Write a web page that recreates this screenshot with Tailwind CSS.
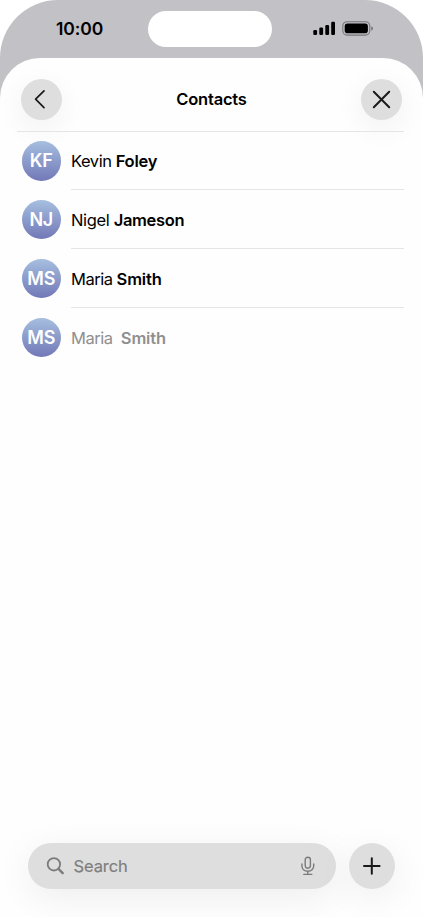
<!DOCTYPE html>
<html lang="en">
<head>
<meta charset="utf-8">
<title>Contacts</title>
<script src="https://cdn.jsdelivr.net/npm/@tailwindcss/browser@4"></script>
</head>
<body class="bg-white font-['Inter',sans-serif] text-black overflow-hidden">
<div class="w-[423px] h-[917px] overflow-hidden rounded-t-[58px] bg-[#c2c1c6] flex flex-col">
  <header class="h-[58px] shrink-0 flex items-start">
    <div class="w-[148px] pl-[56px] pt-[17px] text-[17.5px] leading-6 font-semibold tracking-[-0.1px]">10:00</div>
    <div class="mt-[11px] w-[123.5px] h-[36px] rounded-full bg-white"></div>
    <svg class="ml-[41.5px] mt-[21px]" width="61" height="15" viewBox="0 0 61 15">
      <rect x="0.3" y="9" width="3.8" height="5" rx="1.2"/>
      <rect x="6.3" y="6.6" width="3.8" height="7.4" rx="1.2"/>
      <rect x="12.3" y="4" width="3.8" height="10" rx="1.2"/>
      <rect x="18.2" y="0.8" width="3.8" height="13.2" rx="1.2"/>
      <rect x="29.8" y="0.7" width="27" height="13.4" rx="4.3" fill="none" stroke="#77767a" stroke-width="1.1"/>
      <rect x="31.7" y="2.6" width="23.2" height="9.6" rx="2.8"/>
      <path d="M58.2 5.2c1.2.5 1.8 1.2 1.8 2.2s-.6 1.7-1.8 2.2z" fill="#77767a"/>
    </svg>
  </header>
  <main class="flex-1 rounded-t-[40px] bg-[#fefefe] flex flex-col">
    <div class="h-[73px] shrink-0 px-[20.5px] pt-[20.5px] flex justify-between items-start">
      <button class="size-[41.5px] rounded-full bg-[#dedede] shadow-[0_8px_30px_rgba(0,0,0,0.06),0_0_1px_1px_rgba(255,255,255,0.6)] flex items-center justify-center" aria-label="Back">
        <svg class="shrink-0" width="42" height="42" viewBox="0 0 42 42" fill="none" stroke="#1a1a1a" stroke-width="1.7" stroke-linecap="round" stroke-linejoin="round"><path d="M24 12.8 15.6 21.2l8.4 8.4"/></svg>
      </button>
      <h1 class="pt-[8.5px] text-[16.5px] leading-6 font-semibold tracking-[-0.2px]">Contacts</h1>
      <button class="size-[41.5px] rounded-full bg-[#dedede] shadow-[0_8px_30px_rgba(0,0,0,0.06),0_0_1px_1px_rgba(255,255,255,0.6)] flex items-center justify-center" aria-label="Close">
        <svg class="shrink-0" width="42" height="42" viewBox="0 0 42 42" fill="none" stroke="#1a1a1a" stroke-width="2" stroke-linecap="round"><path d="M12.8 13.8 28.2 29.2M28.2 13.8 12.8 29.2"/></svg>
      </button>
    </div>
    <ul class="ml-[17px] mr-[19px] border-t border-[#e5e5e5] -mb-px text-[16.5px] leading-6">
      <li class="h-[58px] pl-[4.5px] flex items-center gap-[10px]">
        <div class="size-[39.5px] shrink-0 rounded-full bg-linear-to-b from-[#a6bfdf] to-[#7278b7] text-white text-[18px] font-semibold flex items-center justify-center tracking-[-0.2px]">KF</div>
        <div class="h-full flex-1 flex items-center border-b border-[#e5e5e5] whitespace-pre"><span class="tracking-[-0.45px]">Kevin </span><span class="font-semibold tracking-[-0.25px]">Foley</span></div>
      </li>
      <li class="h-[59px] pl-[4.5px] flex items-center gap-[10px]">
        <div class="size-[39.5px] shrink-0 rounded-full bg-linear-to-b from-[#a6bfdf] to-[#7278b7] text-white text-[18px] font-semibold flex items-center justify-center tracking-[-0.2px]">NJ</div>
        <div class="h-full flex-1 flex items-center border-b border-[#e5e5e5] whitespace-pre pt-px"><span class="tracking-[-0.35px]">Nigel </span><span class="font-semibold tracking-[-0.33px]">Jameson</span></div>
      </li>
      <li class="h-[59px] pl-[4.5px] flex items-center gap-[10px]">
        <div class="size-[39.5px] shrink-0 rounded-full bg-linear-to-b from-[#a6bfdf] to-[#7278b7] text-white text-[18px] font-semibold flex items-center justify-center tracking-[-0.2px]">MS</div>
        <div class="h-full flex-1 flex items-center border-b border-[#e5e5e5] whitespace-pre pt-px"><span class="tracking-[-0.5px]">Maria </span><span class="font-semibold tracking-[-0.15px]">Smith</span></div>
      </li>
      <li class="h-[59px] pl-[4.5px] flex items-center gap-[10px]">
        <div class="size-[39.5px] shrink-0 rounded-full bg-linear-to-b from-[#a6bfdf] to-[#7278b7] text-white text-[18px] font-semibold flex items-center justify-center tracking-[-0.2px]">MS</div>
        <div class="h-full flex-1 flex items-center whitespace-pre text-[#8f8f8f]"><span class="tracking-[-0.48px]">Maria  </span><span class="font-semibold tracking-[-0.15px]">Smith</span></div>
      </li>
    </ul>
    <div class="mt-auto mb-[28.5px] ml-[28px] mr-[28.5px] flex justify-between">
      <div class="w-[307.5px] h-[45.5px] rounded-full bg-[#dedede] shadow-[0_8px_36px_rgba(0,0,0,0.07),0_0_1px_1px_rgba(255,255,255,0.6)] flex items-center pl-[18px] pr-[20px] text-[#7e7f7f]">
        <svg width="20" height="20" viewBox="0 0 20 20" fill="none" stroke="#7b7b7c" stroke-linecap="round"><circle cx="7.9" cy="8.3" r="6.2" stroke-width="1.8"/><path d="m12.6 13 4.1 4.1" stroke-width="2.4"/></svg>
        <span class="ml-[7.5px] text-[16.5px] leading-6 tracking-[-0.1px] [-webkit-text-stroke:0.2px_#7e7f7f]">Search</span>
        <svg class="ml-auto" width="16" height="20" viewBox="0 0 16 20" fill="none" stroke="#7b7b7c" stroke-width="1.4" stroke-linecap="round"><rect x="5.2" y="1.2" width="5.2" height="11" rx="2.6"/><path d="M1.9 8v1.8c0 3.3 2.4 5.5 5.9 5.5s5.9-2.2 5.9-5.5V8M7.8 15.4v2.8M3.8 18.4h8"/></svg>
      </div>
      <button class="size-[45.5px] rounded-full bg-[#dedede] shadow-[0_8px_36px_rgba(0,0,0,0.07),0_0_1px_1px_rgba(255,255,255,0.6)] flex items-center justify-center" aria-label="Add">
        <svg width="45" height="45" viewBox="0 0 45 45" fill="none" stroke="#1a1a1a" stroke-width="2" stroke-linecap="round"><path d="M22.8 15.2v15.6M15 23h15.6"/></svg>
      </button>
    </div>
  </main>
</div>
</body>
</html>
